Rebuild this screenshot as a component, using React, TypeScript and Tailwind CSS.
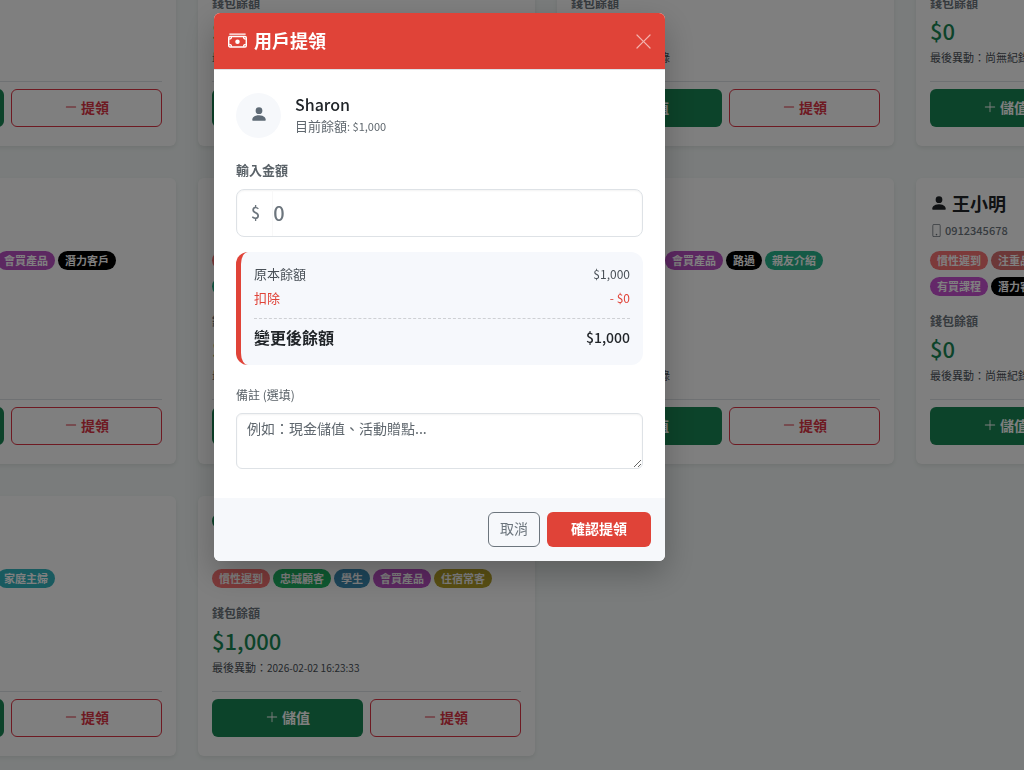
import { FormEvent, useState } from "react";
import { BsCheckCircleFill, BsDashLg, BsPersonFill, BsPhone, BsPlusLg, BsXLg } from "react-icons/bs";

type Tag = { label: string; color: string };

type Customer = {
  id: number;
  name: string;
  phone: string;
  balance: number;
  lastChange: string;
  verified?: boolean;
  tags: Tag[];
};

const tag = {
  late: { label: "慣性遲到", color: "bg-[#f87474]" },
  quality: { label: "注重品質", color: "bg-[#d97070]" },
  course: { label: "有買課程", color: "bg-[#c850d2]" },
  product: { label: "會買產品", color: "bg-[#b950c3]" },
  potential: { label: "潛力客戶", color: "bg-black" },
  passing: { label: "路過", color: "bg-black" },
  referral: { label: "親友介紹", color: "bg-[#28b48c]" },
  loyal: { label: "忠誠顧客", color: "bg-[#1eb464]" },
  student: { label: "學生", color: "bg-[#3c8cb4]" },
  hotel: { label: "住宿常客", color: "bg-[#b4a028]" },
  housewife: { label: "家庭主婦", color: "bg-[#32b4be]" },
  weekday: { label: "平日下午客", color: "bg-[#3c8cb4]" },
  weekend: { label: "週末固定客", color: "bg-[#1eb464]" },
  online: { label: "線上課程訂閱戶", color: "bg-[#3c8cb4]" },
};

const NO_RECORD = "尚無紀錄";

const customers: Customer[] = [
  { id: 1, name: "林小美", phone: "0911222333", balance: 0, lastChange: NO_RECORD, tags: [tag.late] },
  { id: 2, name: "陳大文", phone: "0922333444", balance: 0, lastChange: NO_RECORD, tags: [tag.loyal] },
  { id: 3, name: "張小華", phone: "0933444555", balance: 0, lastChange: NO_RECORD, tags: [tag.student] },
  { id: 4, name: "李小龍", phone: "0944555666", balance: 0, lastChange: NO_RECORD, tags: [tag.hotel] },
  {
    id: 5,
    name: "黃小玲",
    phone: "0955666777",
    balance: 0,
    lastChange: NO_RECORD,
    tags: [tag.weekday, tag.weekend, tag.product, tag.potential],
  },
  {
    id: 6,
    name: "吳小天",
    phone: "0966777888",
    balance: 0,
    lastChange: NO_RECORD,
    tags: [tag.late, tag.loyal, tag.student, tag.product, tag.hotel, tag.referral],
  },
  {
    id: 7,
    name: "周小倫",
    phone: "0977888999",
    balance: 0,
    lastChange: NO_RECORD,
    tags: [tag.online, tag.product, tag.passing, tag.referral],
  },
  {
    id: 8,
    name: "王小明",
    phone: "0912345678",
    balance: 0,
    lastChange: NO_RECORD,
    tags: [tag.late, tag.quality, tag.loyal, tag.student, tag.hotel, tag.course, tag.potential],
  },
  {
    id: 9,
    name: "蔡小依",
    phone: "0988999000",
    balance: 0,
    lastChange: NO_RECORD,
    tags: [tag.weekday, tag.weekend, tag.housewife],
  },
  {
    id: 10,
    name: "Sharon",
    phone: "0900111222",
    balance: 1000,
    lastChange: "2026-02-02 16:23:33",
    verified: true,
    tags: [tag.late, tag.loyal, tag.student, tag.product, tag.hotel],
  },
];

function money(value: number) {
  return `$${value.toLocaleString("en-US")}`;
}

function CashIcon({ className }: { className?: string }) {
  return (
    <svg viewBox="0 0 16 16" fill="none" stroke="currentColor" className={className} aria-hidden="true">
      <path d="M1.5 2.6h13" strokeWidth="1" strokeLinecap="round" />
      <rect x="0.6" y="4.6" width="14.8" height="8.8" rx="1" strokeWidth="1.2" />
      <path
        d="M1 6.8a2 2 0 0 0 2-2M15 6.8a2 2 0 0 1-2-2M1 11.2a2 2 0 0 1 2 2M15 11.2a2 2 0 0 0-2 2"
        strokeWidth="1"
      />
      <circle cx="8" cy="9" r="1.9" fill="currentColor" stroke="none" />
    </svg>
  );
}

function CustomerCard({ customer }: { customer: Customer }) {
  return (
    <article className="flex flex-col rounded-md bg-white px-3.5 pt-3.5 pb-[19px] shadow-[0_2px_4px_rgba(0,0,0,0.08)]">
      <h2 className="flex h-[22px] items-center gap-1 text-lg leading-none font-bold text-[#212529]">
        {customer.verified ? (
          <BsCheckCircleFill className="size-4 text-[#198754]" />
        ) : (
          <BsPersonFill className="size-[18px]" />
        )}
        {customer.name}
      </h2>
      <p className="mt-2 flex h-4 items-center gap-0.5 text-[11px] font-medium text-[#6c757d]">
        <BsPhone className="size-[13px]" />
        {customer.phone}
      </p>
      <ul className="mt-[13px] mb-[17px] flex flex-wrap gap-x-[3px] gap-y-[7px]">
        {customer.tags.map((item) => (
          <li
            key={item.label}
            className={`h-[19px] rounded-full px-[7px] text-[11px] leading-[18px] font-bold whitespace-nowrap text-white ${item.color}`}
          >
            {item.label}
          </li>
        ))}
      </ul>
      <div className="mt-auto">
        <p className="text-xs leading-4 font-bold text-[#6c757d]">錢包餘額</p>
        <p className="mt-[5px] mb-[5px] text-[22px] leading-7 font-medium text-[#198754]">
          {money(customer.balance)}
        </p>
        <p className="flex h-4 items-center text-[11px] whitespace-nowrap text-[#495057]">
          最後異動：
          <span className={customer.lastChange === NO_RECORD ? "text-[11px]" : "text-[10px]"}>
            {customer.lastChange}
          </span>
        </p>
        <div className="mt-4 grid grid-cols-2 gap-[7px] border-t border-[#dee2e6] pt-[7px]">
          <button
            type="button"
            className="flex h-[38px] items-center justify-center gap-[3px] rounded-md bg-[#198754] pb-0.5 text-sm font-bold text-white"
          >
            <BsPlusLg className="size-3.5" />
            儲值
          </button>
          <button
            type="button"
            className="flex h-[38px] items-center justify-center gap-[3px] rounded-md border border-[#dc3545] pb-0.5 text-sm font-bold text-[#dc3545]"
          >
            <BsDashLg className="size-3.5" />
            提領
          </button>
        </div>
      </div>
    </article>
  );
}

function WithdrawModal({ name, balance }: { name: string; balance: number }) {
  const [amount, setAmount] = useState("");
  const [note, setNote] = useState("");

  const deduction = Number(amount) || 0;

  function handleSubmit(e: FormEvent<HTMLFormElement>) {
    e.preventDefault();
  }

  return (
    <form
      role="dialog"
      aria-labelledby="withdraw-title"
      onSubmit={handleSubmit}
      className="w-full max-w-[451px] overflow-hidden rounded-md bg-white shadow-[0_12px_32px_rgba(0,0,0,0.25)]"
    >
      <header className="flex h-14 items-center justify-between bg-[#e04338] px-3.5 text-white">
        <h1 id="withdraw-title" className="flex items-center gap-[7px] pb-0.5 text-lg leading-7 font-bold">
          <CashIcon className="size-[19px]" />
          用戶提領
        </h1>
        <button type="button" aria-label="關閉" className="-mr-0.5 opacity-60">
          <BsXLg className="size-[19px]" />
        </button>
      </header>

      <div className="border-t border-[#dee2e6] px-[22px] pt-[23px] pb-[29px]">
        <div className="flex items-center gap-3.5">
          <div className="flex size-[45px] items-center justify-center rounded-full bg-[#f6f8fb] pb-1 text-[#5f6b76]">
            <BsPersonFill className="size-[18px]" />
          </div>
          <div>
            <p className="text-base leading-5 font-medium text-[#212529]">{name}</p>
            <p className="text-[13px] leading-6 text-[#5f676e]">
              目前餘額<span className="text-[11px]">: {money(balance)}</span>
            </p>
          </div>
        </div>

        <label htmlFor="amount" className="mt-[22px] block text-[13px] leading-5 font-bold text-[#5a6268]">
          輸入金額
        </label>
        <div className="mt-[9px] flex h-12 items-center rounded-lg border border-[#dee2e6] shadow-[inset_0_1px_2px_rgba(0,0,0,0.05)]">
          <span className="pb-0.5 pl-3.5 text-base font-medium text-[#6c757d]">$</span>
          <input
            id="amount"
            inputMode="numeric"
            value={amount}
            onChange={(e) => setAmount(e.target.value)}
            placeholder="0"
            className="ml-3 h-full min-w-0 flex-1 border-l border-[#f8f8f8] pb-0.5 text-xl font-medium text-[#212529] outline-none placeholder:text-[#6c757d]"
          />
        </div>

        <dl className="mt-[15px] rounded-xl border-l-[5px] border-[#e04338] bg-[#f6f8fc] px-[13px] pt-2.5 pb-3.5">
          <div className="flex items-center justify-between text-[13px] leading-6 text-[#495057]">
            <dt>原本餘額</dt>
            <dd className="text-xs leading-6">{money(balance)}</dd>
          </div>
          <div className="flex items-center justify-between text-[13px] leading-6 text-[#e04338]">
            <dt>扣除</dt>
            <dd className="text-xs leading-6">- {money(deduction)}</dd>
          </div>
          <div className="mt-2 flex items-center justify-between border-t border-dashed border-[#ced0d4] pt-1 text-base leading-7 font-bold text-[#212529]">
            <dt>變更後餘額</dt>
            <dd className="text-sm leading-7 font-medium">{money(balance - deduction)}</dd>
          </div>
        </dl>

        <label htmlFor="note" className="mt-5 block text-xs leading-5 text-[#5a6268]">
          備註 (選填)
        </label>
        <textarea
          id="note"
          rows={2}
          value={note}
          onChange={(e) => setNote(e.target.value)}
          placeholder="例如：現金儲值、活動贈點..."
          className="mt-2 block h-14 w-full rounded-md border border-[#dee2e6] px-2.5 py-[3px] text-sm leading-[22px] text-[#212529] shadow-[inset_0_1px_2px_rgba(0,0,0,0.05)] outline-none placeholder:text-[#5f676e]"
        />
      </div>

      <footer className="flex justify-end gap-[7px] bg-[#f6f8fb] p-3.5">
        <button
          type="button"
          className="h-[35px] rounded-md border border-[#6c757d] px-[11px] pb-1 text-sm text-[#6c757d]"
        >
          取消
        </button>
        <button type="submit" className="h-[35px] rounded-md bg-[#e04338] px-6 pb-1 text-sm font-bold text-white">
          確認提領
        </button>
      </footer>
    </form>
  );
}

export default function App() {
  return (
    <main className="h-screen overflow-hidden bg-[#f4f9f8] font-['Noto_Sans_CJK_TC',sans-serif]">
      <section className="-mt-[114px] -mr-[229px] -ml-[161px] grid grid-cols-4 gap-x-[22px] gap-y-8">
        {customers.map((customer) => (
          <CustomerCard key={customer.id} customer={customer} />
        ))}
      </section>

      <div className="fixed inset-0 flex items-start justify-center bg-black/50 pt-[13px] pr-[145px]">
        <WithdrawModal name="Sharon" balance={1000} />
      </div>
    </main>
  );
}
